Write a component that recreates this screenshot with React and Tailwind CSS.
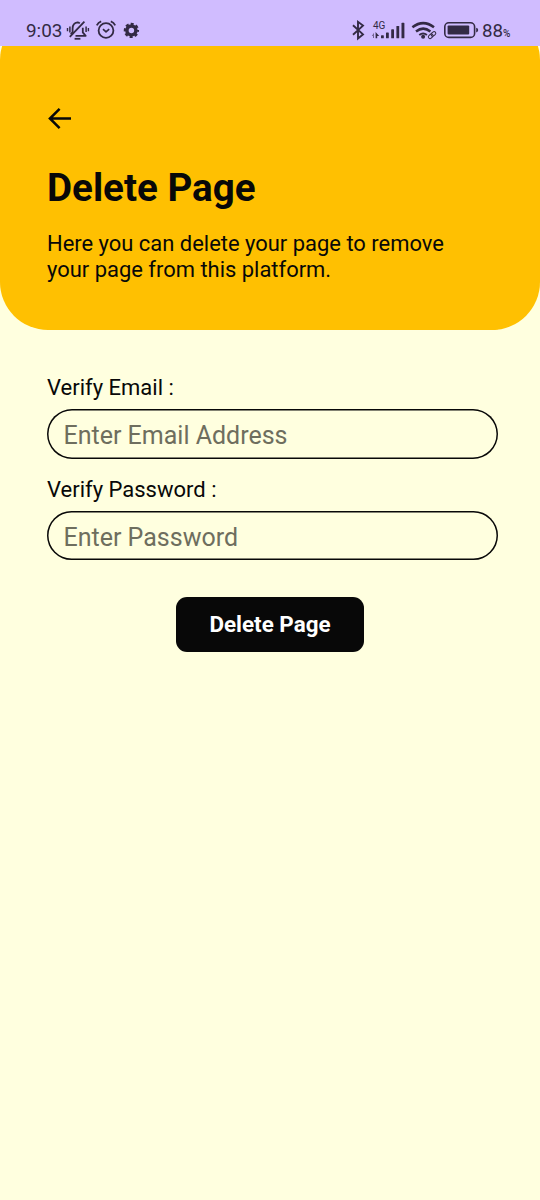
const ink = "#332a44";

function LeftIcons() {
  return (
    <svg className="ml-[3px] h-6 w-[76px] shrink-0" viewBox="66 18 76 24" fill="none" stroke={ink} strokeWidth="1.8">
      <path d="M75.5 35.8h10.2l-2.9-3.4v-4.6M79.8 23.4q-1.2-1-2.2-1-5 .8-5 6v3.6l-1.8 2.4" strokeLinejoin="round" />
      <path d="M74.6 38.8h5.8" />
      <path d="M69.8 36.8L84.4 21.6" />
      <path d="M69.9 26.5v6M86.1 26.5v5.6" strokeWidth="1.5" />
      <path d="M67.5 28v3.2M88.4 28v3.2" strokeWidth="1.4" />
      <circle cx="106" cy="30.5" r="7.4" />
      <path d="M103 29.2l3 2.6 3.2-2.6" strokeLinejoin="round" strokeWidth="1.7" />
      <path d="M96.8 25.4q1.4-3 4.4-4M115.2 25.4q-1.4-3-4.4-4" />
      <circle cx="131.4" cy="30.4" r="4.5" strokeWidth="3.5" />
      <circle cx="131.4" cy="30.4" r="6.5" strokeWidth="2.3" strokeDasharray="3 2.105" strokeDashoffset="1.5" />
    </svg>
  );
}

function RightIcons() {
  return (
    <svg className="h-6 w-[131px] shrink-0" viewBox="350 18 131 24" fill="none" stroke={ink} strokeWidth="1.9">
      <path d="M353 25.2l10 9.2-5 4.1V21.8l5 3.8-10 9.2" />
      <g stroke="none" fill={ink}>
        <path d="M371.8 36l2.2-3.2v5.2h-1v-2z" opacity=".6" />
        <path d="M375.6 38.2v-6.2l3.6 4h-2v2.2z" />
        <rect x="381" y="35.2" width="2.8" height="3.1" rx=".6" />
        <rect x="386" y="32.5" width="2.8" height="5.8" rx=".6" />
        <rect x="391.2" y="29.3" width="2.8" height="9" rx=".6" />
        <rect x="396.4" y="26" width="2.8" height="12.3" rx=".6" />
        <rect x="401.5" y="22.8" width="2.9" height="15.5" rx=".6" />
      </g>
      <path d="M412.4 27.2q10.8-8.2 21.6 0M416 31.4q7.2-5.6 14.4 0" strokeWidth="2.5" />
      <path d="M419.3 35q3.8-3 7.6 0" strokeWidth="2" />
      <circle cx="423.1" cy="36.7" r="2" fill={ink} stroke="none" />
      <g strokeWidth="1" transform="rotate(-42 432 35)">
        <rect x="427.6" y="33.4" width="5.2" height="3.4" rx="1.7" />
        <rect x="431.2" y="33.4" width="5.2" height="3.4" rx="1.7" />
      </g>
      <rect x="444.8" y="22.8" width="29.8" height="14.6" rx="4" strokeWidth="1.6" />
      <rect x="447.6" y="25.6" width="21.6" height="9" rx="1" fill={ink} stroke="none" />
      <path d="M476.2 27.8q2 .4 2 2.3t-2 2.3z" fill={ink} stroke="none" />
    </svg>
  );
}

function StatusBar() {
  return (
    <div className="relative z-10 flex h-[46px] w-full items-start bg-[#d0bcff] pl-[26px] pt-[18px] text-[#332a44]">
      <span className="w-[37px] text-[18.9px] leading-[26px]">9:03</span>
      <LeftIcons />
      <div className="relative ml-auto mr-[29px] flex">
        <RightIcons />
        <span className="absolute left-[23px] top-[2px] text-[10px] leading-[11px]">4G</span>
        <span className="ml-px w-[21px] text-[18.7px] leading-[26px]">88</span>
        <span className="w-[8px] pt-[10px] text-[10px] font-medium leading-[11px]">%</span>
      </div>
    </div>
  );
}

function Field({ label, placeholder, type }) {
  return (
    <label className="block">
      <span className="block h-[34px] text-[22px] leading-[26px]">{label}</span>
      <input
        type={type}
        placeholder={placeholder}
        className="block h-[49.5px] w-[451px] rounded-full bg-transparent px-[16.5px] pt-[3px] text-[25px] leading-[30px] shadow-[inset_0_0_0_1.5px_#080808] outline-none placeholder:text-[#6e6e5e] placeholder:opacity-100"
      />
    </label>
  );
}

export default function App() {
  return (
    <div className="min-h-[1200px] w-[540px] bg-[#ffffdf] font-[Roboto,sans-serif] text-[#080808]">
      <StatusBar />
      <header className="-mt-[34px] h-[318px] rounded-[48px] bg-[#ffc001] px-[47px] pt-[94px]">
        <button aria-label="Back" className="block h-6 w-6">
          <svg className="h-6 w-6" viewBox="0 0 24 24" fill="none" stroke="currentColor" strokeWidth="2.5">
            <path d="M24 12.5H3.2M12.6 2.8l-9.7 9.7 9.7 9.7" />
          </svg>
        </button>
        <h1 className="mt-[35px] text-[38.6px] font-bold leading-[46px]">Delete Page</h1>
        <p className="mt-[20px] whitespace-nowrap text-[21.95px] leading-[26px]">
          Here you can delete your page to remove
          <br />
          your page from this platform.
        </p>
      </header>
      <main className="flex flex-col gap-[18px] pl-[47px] pt-[45.4px]">
        <Field label="Verify Email :" placeholder="Enter Email Address" type="email" />
        <Field label="Verify Password :" placeholder="Enter Password" type="password" />
        <button className="ml-[129px] mt-[18.4px] h-[55px] w-[188px] rounded-[11px] bg-[#080808] pt-[2px] text-[22.4px] font-bold text-white">
          Delete Page
        </button>
      </main>
    </div>
  );
}
